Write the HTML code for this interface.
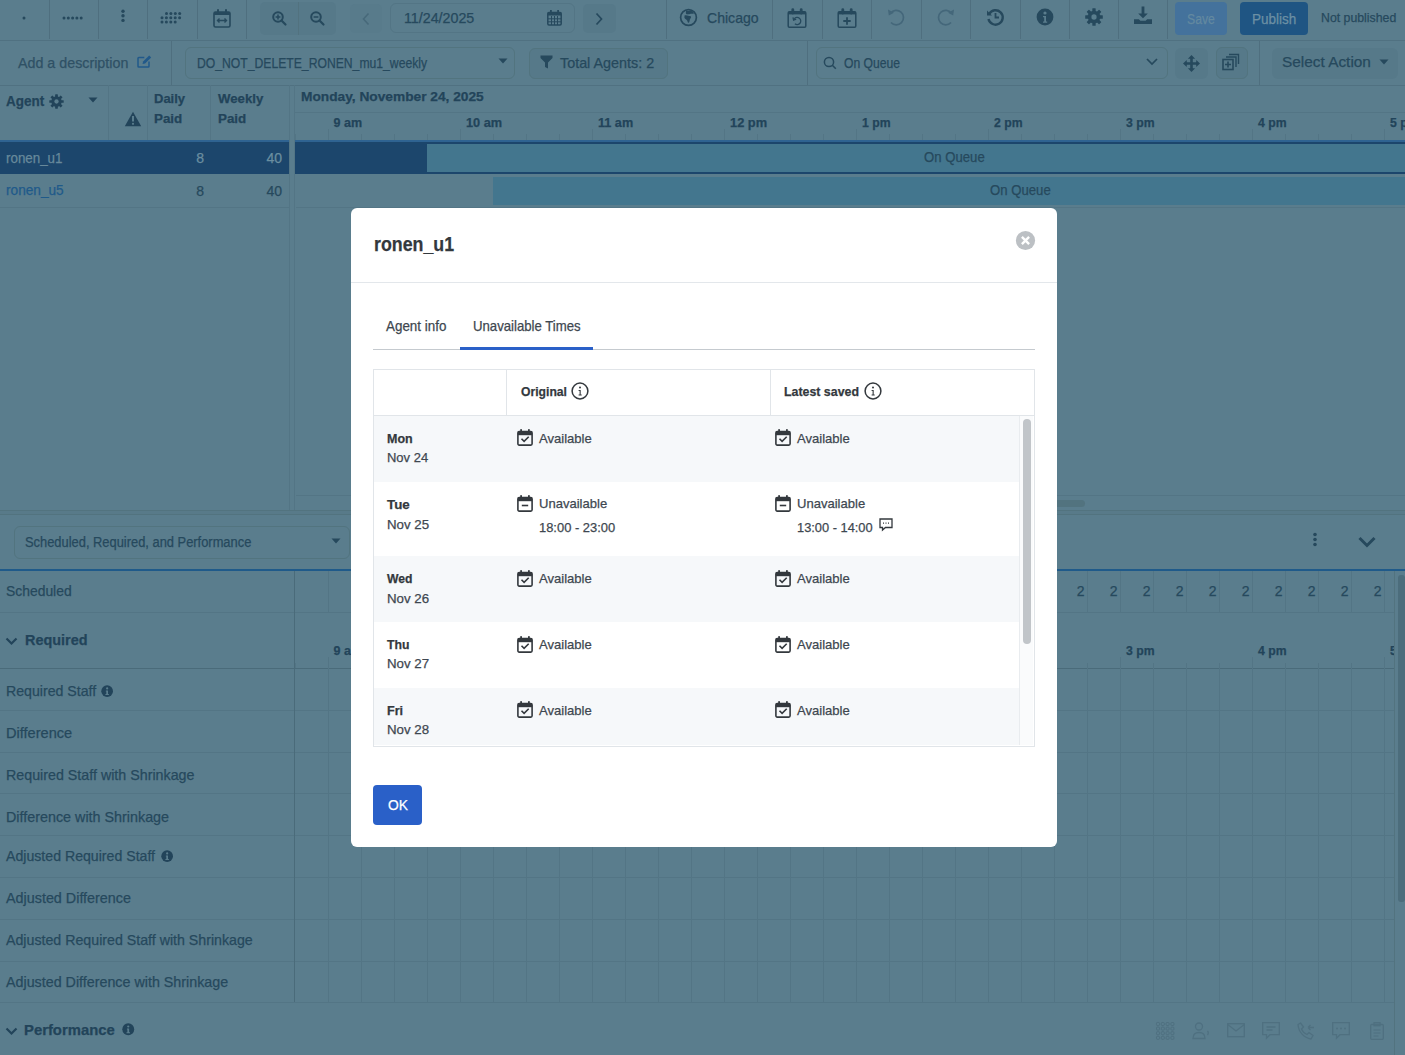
<!DOCTYPE html><html><head><meta charset="utf-8"><title>Schedule</title><style>*{margin:0;padding:0}html,body{width:1405px;height:1055px;overflow:hidden;background:#5a7d8d}
.a{position:absolute}.t{font-family:"Liberation Sans",sans-serif;line-height:1;white-space:nowrap;-webkit-text-stroke:0.25px currentColor}
svg{display:block;overflow:visible}</style></head><body>
<div class="a" style="left:0px;top:0px;width:1405px;height:1055px;background:#5a7d8d;"></div>
<div class="a" style="left:0px;top:40px;width:1405px;height:1px;background:#507181;"></div>
<div class="a" style="left:49px;top:0px;width:1px;height:38.5px;background:#4f6f7f;"></div>
<div class="a" style="left:98px;top:0px;width:1px;height:38.5px;background:#4f6f7f;"></div>
<div class="a" style="left:147px;top:0px;width:1px;height:38.5px;background:#4f6f7f;"></div>
<div class="a" style="left:197px;top:0px;width:1px;height:38.5px;background:#4f6f7f;"></div>
<div class="a" style="left:246px;top:0px;width:1px;height:38.5px;background:#4f6f7f;"></div>
<div class="a" style="left:666px;top:0px;width:1px;height:38.5px;background:#4f6f7f;"></div>
<div class="a" style="left:772px;top:0px;width:1px;height:38.5px;background:#4f6f7f;"></div>
<div class="a" style="left:822px;top:0px;width:1px;height:38.5px;background:#4f6f7f;"></div>
<div class="a" style="left:871px;top:0px;width:1px;height:38.5px;background:#4f6f7f;"></div>
<div class="a" style="left:921px;top:0px;width:1px;height:38.5px;background:#4f6f7f;"></div>
<div class="a" style="left:970px;top:0px;width:1px;height:38.5px;background:#4f6f7f;"></div>
<div class="a" style="left:1020px;top:0px;width:1px;height:38.5px;background:#4f6f7f;"></div>
<div class="a" style="left:1069px;top:0px;width:1px;height:38.5px;background:#4f6f7f;"></div>
<div class="a" style="left:1118px;top:0px;width:1px;height:38.5px;background:#4f6f7f;"></div>
<div class="a" style="left:1167px;top:0px;width:1px;height:38.5px;background:#4f6f7f;"></div>
<svg class="a" style="left:20px;top:14px;" width="8" height="8" viewBox="0 0 8 8"><circle cx="4" cy="4" r="1.5" fill="#26495d"/></svg>
<svg class="a" style="left:60px;top:14px;" width="26" height="8" viewBox="0 0 26 8"><circle cx="4.0" cy="4" r="1.5" fill="#26495d"/><circle cx="8.3" cy="4" r="1.5" fill="#26495d"/><circle cx="12.6" cy="4" r="1.5" fill="#26495d"/><circle cx="16.9" cy="4" r="1.5" fill="#26495d"/><circle cx="21.2" cy="4" r="1.5" fill="#26495d"/></svg>
<svg class="a" style="left:119px;top:8px;" width="8" height="18" viewBox="0 0 8 18"><circle cx="4" cy="3.2" r="1.7" fill="#26495d"/><circle cx="4" cy="7.8" r="1.7" fill="#26495d"/><circle cx="4" cy="12.4" r="1.7" fill="#26495d"/></svg>
<svg class="a" style="left:160px;top:11px;" width="24" height="14" viewBox="0 0 24 14"><circle cx="6.5" cy="2.5" r="1.5" fill="#26495d"/><circle cx="10.9" cy="2.5" r="1.5" fill="#26495d"/><circle cx="15.3" cy="2.5" r="1.5" fill="#26495d"/><circle cx="19.7" cy="2.5" r="1.5" fill="#26495d"/><circle cx="2.0" cy="6.8" r="1.5" fill="#26495d"/><circle cx="6.4" cy="6.8" r="1.5" fill="#26495d"/><circle cx="10.8" cy="6.8" r="1.5" fill="#26495d"/><circle cx="15.2" cy="6.8" r="1.5" fill="#26495d"/><circle cx="19.6" cy="6.8" r="1.5" fill="#26495d"/><circle cx="2.0" cy="11" r="1.5" fill="#26495d"/><circle cx="6.4" cy="11" r="1.5" fill="#26495d"/><circle cx="10.8" cy="11" r="1.5" fill="#26495d"/><circle cx="15.2" cy="11" r="1.5" fill="#26495d"/></svg>
<svg class="a" style="left:213px;top:8px;" width="18" height="20" viewBox="0 0 18 20"><rect x="1" y="4" width="16" height="15" rx="1.5" fill="none" stroke="#26495d" stroke-width="1.6"/><rect x="1" y="4" width="16" height="3" fill="#26495d"/><rect x="4" y="1" width="2" height="5" rx="1" fill="#26495d"/><rect x="12" y="1" width="2" height="5" rx="1" fill="#26495d"/><path d="M4.5 12.5h9M6.5 10.5l-2 2 2 2M11.5 10.5l2 2-2 2" fill="none" stroke="#26495d" stroke-width="1.4"/></svg>
<div class="a" style="left:260px;top:2px;width:76px;height:33px;background:#567989;border-radius:5px;"></div>
<div class="a" style="left:298px;top:2px;width:1px;height:33px;background:#52727f;"></div>
<svg class="a" style="left:272px;top:11px;" width="15" height="15" viewBox="0 0 15 15"><circle cx="6" cy="6" r="4.8" fill="none" stroke="#26495d" stroke-width="2"/><path d="M9.5 9.5l4 4" stroke="#26495d" stroke-width="2.2" stroke-linecap="round"/><path d="M3.6 6h4.8" stroke="#26495d" stroke-width="1.5"/><path d="M6 3.6v4.8" stroke="#26495d" stroke-width="1.5"/></svg>
<svg class="a" style="left:310px;top:11px;" width="15" height="15" viewBox="0 0 15 15"><circle cx="6" cy="6" r="4.8" fill="none" stroke="#26495d" stroke-width="2"/><path d="M9.5 9.5l4 4" stroke="#26495d" stroke-width="2.2" stroke-linecap="round"/><path d="M3.6 6h4.8" stroke="#26495d" stroke-width="1.5"/></svg>
<div class="a" style="left:350px;top:4px;width:32px;height:29px;background:#587b8b;border-radius:5px;"></div>
<svg class="a" style="left:361px;top:12px;" width="10" height="14" viewBox="0 0 10 14"><path d="M7.5 1.5L2.5 7l5 5.5" fill="none" stroke="#47697a" stroke-width="1.6"/></svg>
<div class="a" style="left:390px;top:3px;width:185px;height:30px;background:transparent;box-sizing:border-box;border:1px solid #537585;border-radius:6px;"></div>
<div id="t0" class="a t" style="left:403.5px;top:11.35px;font-size:14px;color:#26495d;font-weight:400;transform:scaleX(1.0184);transform-origin:0 0;">11/24/2025</div>
<svg class="a" style="left:547px;top:10px;" width="15" height="16" viewBox="0 0 15 16"><rect x="0.8" y="2.5" width="13.4" height="12.5" rx="1.2" fill="none" stroke="#26495d" stroke-width="1.5"/><rect x="0.8" y="2.5" width="13.4" height="3" fill="#26495d"/><rect x="3" y="0" width="1.8" height="4" fill="#26495d"/><rect x="10.2" y="0" width="1.8" height="4" fill="#26495d"/><path d="M1 8.8h13M1 11.8h13M4.5 6v9M7.5 6v9M10.5 6v9" stroke="#26495d" stroke-width="1"/></svg>
<div class="a" style="left:583px;top:4px;width:33px;height:29px;background:#567989;border-radius:5px;"></div>
<svg class="a" style="left:594px;top:12px;" width="10" height="14" viewBox="0 0 10 14"><path d="M2.5 1.5L7.5 7l-5 5.5" fill="none" stroke="#26495d" stroke-width="1.7"/></svg>
<svg class="a" style="left:679px;top:8px;" width="19" height="19" viewBox="0 0 19 19"><circle cx="9.5" cy="9.5" r="7.9" fill="none" stroke="#26495d" stroke-width="1.7"/><path d="M7 2.5c1.5 1 3 .5 4.5 0 1.5.7 3 1.8 3.5 3-1.5.5-3 0-4 .5-1 .3-2 0-3 .5-1-.5-1.5-1.5-1-2.2z" fill="#26495d"/><path d="M5.5 7.5c1.5-.5 3 0 4 .3 1 .5 2 0 2.5.8.3 1-.5 1.8-1 2.6-.5 1-.3 2.3-1 3.4-.6.6-1.2 0-1.4-.8-.2-1.2-.8-2-1.8-2.6-1-.5-1.8-1.5-1.3-2.6z" fill="#26495d"/></svg>
<div id="t1" class="a t" style="left:706.5px;top:10.30px;font-size:15px;color:#26495d;font-weight:400;transform:scaleX(0.9380);transform-origin:0 0;">Chicago</div>
<svg class="a" style="left:787px;top:7px;" width="20" height="22" viewBox="0 0 20 22"><rect x="1.2" y="4.8" width="17.6" height="15.4" rx="1.3" fill="none" stroke="#26495d" stroke-width="1.5"/><rect x="1.2" y="4.8" width="17.6" height="2.6" fill="#26495d"/><path d="M5.8 6V2.6M14.2 6V2.6" stroke="#26495d" stroke-width="2.8" stroke-linecap="round"/><path d="M7.3 11.8a3.6 3.6 0 1 1 .6 5" fill="none" stroke="#26495d" stroke-width="1.3"/><path d="M6 10.3l.6 2.8 2.6-1" fill="none" stroke="#26495d" stroke-width="1.3"/></svg>
<svg class="a" style="left:837px;top:7px;" width="20" height="22" viewBox="0 0 20 22"><rect x="1.2" y="4.8" width="17.6" height="15.4" rx="1.3" fill="none" stroke="#26495d" stroke-width="1.5"/><rect x="1.2" y="4.8" width="17.6" height="2.6" fill="#26495d"/><path d="M5.8 6V2.6M14.2 6V2.6" stroke="#26495d" stroke-width="2.8" stroke-linecap="round"/><path d="M10 10.3v7.4M6.3 14h7.4" stroke="#26495d" stroke-width="1.8"/></svg>
<svg class="a" style="left:886px;top:7px;" width="20" height="20" viewBox="0 0 20 20"><path d="M4.6 6.2A7.2 7.2 0 1 1 5 15.5" fill="none" stroke="#44677a" stroke-width="1.7"/><path d="M2 2.5l.8 6 5.2-2.8z" fill="#44677a"/></svg>
<svg class="a" style="left:936px;top:7px;" width="20" height="20" viewBox="0 0 20 20"><path d="M15.4 6.2A7.2 7.2 0 1 0 15 15.5" fill="none" stroke="#44677a" stroke-width="1.7"/><path d="M18 2.5l-.8 6-5.2-2.8z" fill="#44677a"/></svg>
<svg class="a" style="left:986px;top:8px;" width="18" height="18" viewBox="0 0 18 18"><path d="M3.2 6A7.2 7.2 0 1 1 2.5 11" fill="none" stroke="#26495d" stroke-width="2.4"/><path d="M1 2.5v5h5z" fill="#26495d"/><path d="M9.5 5v4.5h3.5" fill="none" stroke="#26495d" stroke-width="1.8"/></svg>
<svg class="a" style="left:1036px;top:8px;" width="18" height="18" viewBox="0 0 18 18"><circle cx="9" cy="9" r="8.4" fill="#26495d"/><circle cx="9" cy="5" r="1.6" fill="#5a7d8d"/><path d="M7 8h3v5.5h1.2v1.3H7v-1.3h1.2V9.3H7z" fill="#5a7d8d"/></svg>
<svg class="a" style="left:1085px;top:8px;" width="18" height="18" viewBox="0 0 18 18"><rect x="7.33" y="0.20" width="3.34" height="4.40" rx="0.53" fill="#26495d" transform="rotate(0 9 9)"/><rect x="7.33" y="0.20" width="3.34" height="4.40" rx="0.53" fill="#26495d" transform="rotate(45 9 9)"/><rect x="7.33" y="0.20" width="3.34" height="4.40" rx="0.53" fill="#26495d" transform="rotate(90 9 9)"/><rect x="7.33" y="0.20" width="3.34" height="4.40" rx="0.53" fill="#26495d" transform="rotate(135 9 9)"/><rect x="7.33" y="0.20" width="3.34" height="4.40" rx="0.53" fill="#26495d" transform="rotate(180 9 9)"/><rect x="7.33" y="0.20" width="3.34" height="4.40" rx="0.53" fill="#26495d" transform="rotate(225 9 9)"/><rect x="7.33" y="0.20" width="3.34" height="4.40" rx="0.53" fill="#26495d" transform="rotate(270 9 9)"/><rect x="7.33" y="0.20" width="3.34" height="4.40" rx="0.53" fill="#26495d" transform="rotate(315 9 9)"/><circle cx="9" cy="9" r="6.34" fill="#26495d"/><circle cx="9" cy="9" r="2.64" fill="#5a7d8d"/></svg>
<svg class="a" style="left:1133px;top:6px;" width="20" height="19" viewBox="0 0 20 19"><path d="M8.6 0.5h2.8v7h3.4L10 12.3 5.2 7.5h3.4z" fill="#26495d"/><path d="M1 13.2h4.8l1.6 1.6h5.2l1.6-1.6H19V18H1z" fill="#26495d"/></svg>
<div class="a" style="left:1175px;top:2px;width:52px;height:32.5px;background:#44729c;border-radius:4px;"></div>
<div id="t2" class="a t" style="left:1187px;top:11.65px;font-size:14px;color:#6389a0;font-weight:500;transform:scaleX(0.8716);transform-origin:0 0;">Save</div>
<div class="a" style="left:1240px;top:2px;width:68px;height:32.5px;background:#1f5583;border-radius:4px;"></div>
<div id="t3" class="a t" style="left:1252.4px;top:11.65px;font-size:14px;color:#6c90a4;font-weight:500;transform:scaleX(0.9653);transform-origin:0 0;">Publish</div>
<div id="t4" class="a t" style="left:1321.3px;top:10.80px;font-size:13px;color:#26495d;font-weight:400;transform:scaleX(0.9467);transform-origin:0 0;">Not published</div>
<div class="a" style="left:0px;top:85px;width:1405px;height:1px;background:#507181;"></div>
<div class="a" style="left:171px;top:41px;width:1px;height:44px;background:#4f6f7f;"></div>
<div class="a" style="left:807px;top:41px;width:1px;height:44px;background:#4f6f7f;"></div>
<div class="a" style="left:1259px;top:41px;width:1px;height:44px;background:#4f6f7f;"></div>
<div id="t5" class="a t" style="left:18px;top:54.60px;font-size:15px;color:#2f5165;font-weight:400;transform:scaleX(0.9519);transform-origin:0 0;">Add a description</div>
<svg class="a" style="left:137px;top:55px;" width="16" height="13" viewBox="0 0 16 13"><path d="M12 6.5v4.8a.8.8 0 0 1-.8.8H1.8a.8.8 0 0 1-.8-.8V3.2a.8.8 0 0 1 .8-.8h5.5" fill="none" stroke="#21598a" stroke-width="1.5"/><path d="M5.5 9l.6-2.6L12.2.6l2 2-6.1 5.8z" fill="#21598a"/></svg>
<div class="a" style="left:185px;top:47px;width:330px;height:32px;background:transparent;box-sizing:border-box;border:1px solid #52747f;border-radius:6px;"></div>
<div id="t6" class="a t" style="left:197.4px;top:56.15px;font-size:14px;color:#26495d;font-weight:400;transform:scaleX(0.8697);transform-origin:0 0;">DO_NOT_DELETE_RONEN_mu1_weekly</div>
<svg class="a" style="left:498px;top:58px;" width="10" height="6" viewBox="0 0 10 6"><path d="M0.5 0.5h9L5 5.5z" fill="#26495d"/></svg>
<div class="a" style="left:528.5px;top:47.5px;width:139px;height:31px;background:#567989;box-sizing:border-box;border:1px solid #52747f;border-radius:6px;"></div>
<svg class="a" style="left:540px;top:55px;" width="13" height="14" viewBox="0 0 13 14"><path d="M0.5 0.5h12v2.5L8 7.5v6l-3-1.5v-4.5L0.5 3z" fill="#26495d"/></svg>
<div id="t7" class="a t" style="left:560.4px;top:54.70px;font-size:15px;color:#26495d;font-weight:400;transform:scaleX(0.9567);transform-origin:0 0;">Total Agents: 2</div>
<div class="a" style="left:816px;top:47px;width:351.5px;height:32.2px;background:transparent;box-sizing:border-box;border:1px solid #52747f;border-radius:6px;"></div>
<svg class="a" style="left:823px;top:56px;" width="14" height="14" viewBox="0 0 14 14"><circle cx="6" cy="6" r="4.6" fill="none" stroke="#26495d" stroke-width="1.5"/><path d="M9.3 9.3l3.5 3.5" stroke="#26495d" stroke-width="1.6"/></svg>
<div id="t8" class="a t" style="left:844.2px;top:55.65px;font-size:14px;color:#26495d;font-weight:400;transform:scaleX(0.8686);transform-origin:0 0;">On Queue</div>
<svg class="a" style="left:1146px;top:58px;" width="12" height="8" viewBox="0 0 12 8"><path d="M1 1l5 5 5-5" fill="none" stroke="#26495d" stroke-width="1.7"/></svg>
<div class="a" style="left:1175px;top:47.8px;width:32.5px;height:31.4px;background:#567989;border-radius:6px;"></div>
<svg class="a" style="left:1183px;top:55px;" width="17" height="17" viewBox="0 0 17 17"><path d="M8.5 3v11M3 8.5h11" stroke="#26495d" stroke-width="2.6"/><path d="M8.5 0l3.6 3.8H4.9zM8.5 17l3.6-3.8H4.9zM0 8.5l3.8 3.6V4.9zM17 8.5l-3.8 3.6V4.9z" fill="#26495d"/></svg>
<div class="a" style="left:1215.5px;top:47.2px;width:32.2px;height:31.8px;background:#567989;box-sizing:border-box;border:1px solid #52747f;border-radius:6px;"></div>
<svg class="a" style="left:1222px;top:53px;" width="18" height="18" viewBox="0 0 18 18"><rect x="1" y="6.5" width="10" height="10" fill="none" stroke="#26495d" stroke-width="1.6"/><path d="M4 4h10v10M7 1.5h9.5v9.5" fill="none" stroke="#26495d" stroke-width="1.4"/><path d="M6 8.5v6M3 11.5h6" stroke="#26495d" stroke-width="1.6"/></svg>
<div class="a" style="left:1271.5px;top:47.8px;width:126px;height:31.4px;background:#567989;border-radius:6px;"></div>
<div id="t9" class="a t" style="left:1281.9px;top:54.20px;font-size:15px;color:#26495d;font-weight:400;transform:scaleX(1.0252);transform-origin:0 0;">Select Action</div>
<svg class="a" style="left:1379px;top:59px;" width="10" height="6" viewBox="0 0 10 6"><path d="M0.5 0.5h9L5 5.5z" fill="#26495d"/></svg>
<div class="a" style="left:108px;top:85px;width:1px;height:56px;background:#537585;"></div>
<div class="a" style="left:147px;top:85px;width:1px;height:56px;background:#537585;"></div>
<div class="a" style="left:210px;top:85px;width:1px;height:56px;background:#537585;"></div>
<div id="t10" class="a t" style="left:5.5px;top:94.35px;font-size:14px;color:#22445a;font-weight:700;transform:scaleX(0.9625);transform-origin:0 0;">Agent</div>
<svg class="a" style="left:49px;top:94px;" width="15" height="15" viewBox="0 0 15 15"><rect x="6.13" y="0.30" width="2.74" height="3.60" rx="0.43" fill="#22445a" transform="rotate(0 7.5 7.5)"/><rect x="6.13" y="0.30" width="2.74" height="3.60" rx="0.43" fill="#22445a" transform="rotate(45 7.5 7.5)"/><rect x="6.13" y="0.30" width="2.74" height="3.60" rx="0.43" fill="#22445a" transform="rotate(90 7.5 7.5)"/><rect x="6.13" y="0.30" width="2.74" height="3.60" rx="0.43" fill="#22445a" transform="rotate(135 7.5 7.5)"/><rect x="6.13" y="0.30" width="2.74" height="3.60" rx="0.43" fill="#22445a" transform="rotate(180 7.5 7.5)"/><rect x="6.13" y="0.30" width="2.74" height="3.60" rx="0.43" fill="#22445a" transform="rotate(225 7.5 7.5)"/><rect x="6.13" y="0.30" width="2.74" height="3.60" rx="0.43" fill="#22445a" transform="rotate(270 7.5 7.5)"/><rect x="6.13" y="0.30" width="2.74" height="3.60" rx="0.43" fill="#22445a" transform="rotate(315 7.5 7.5)"/><circle cx="7.5" cy="7.5" r="5.18" fill="#22445a"/><circle cx="7.5" cy="7.5" r="2.16" fill="#5a7d8d"/></svg>
<svg class="a" style="left:88px;top:97px;" width="10" height="6" viewBox="0 0 10 6"><path d="M0.5 0.5h9L5 5.5z" fill="#22445a"/></svg>
<svg class="a" style="left:124px;top:111px;" width="18" height="16" viewBox="0 0 18 16"><path d="M9 0.8L17.2 15.2H0.8z" fill="#22445a"/><path d="M9 5v5.5" stroke="#5a7d8d" stroke-width="2"/><circle cx="9" cy="12.8" r="1.1" fill="#5a7d8d"/></svg>
<div id="t11" class="a t" style="left:154px;top:91.70px;font-size:13px;color:#22445a;font-weight:700;transform-origin:0 0;">Daily</div>
<div id="t12" class="a t" style="left:154px;top:111.60px;font-size:13px;color:#22445a;font-weight:700;transform:scaleX(1.0286);transform-origin:0 0;">Paid</div>
<div id="t13" class="a t" style="left:218px;top:91.70px;font-size:13px;color:#22445a;font-weight:700;transform:scaleX(1.0146);transform-origin:0 0;">Weekly</div>
<div id="t14" class="a t" style="left:218px;top:111.60px;font-size:13px;color:#22445a;font-weight:700;transform:scaleX(1.0286);transform-origin:0 0;">Paid</div>
<div class="a" style="left:289px;top:85px;width:1px;height:425px;background:#537585;"></div>
<div class="a" style="left:294px;top:85px;width:1px;height:425px;background:#537585;"></div>
<div id="t15" class="a t" style="left:300.5px;top:89.90px;font-size:13px;color:#22445a;font-weight:700;transform:scaleX(1.0553);transform-origin:0 0;">Monday, November 24, 2025</div>
<div class="a" style="left:295px;top:112px;width:1110px;height:1px;background:#537585;"></div>
<div id="t16" class="a t" style="left:333.6px;top:116.82px;font-size:12.5px;color:#22445a;font-weight:700;transform-origin:0 0;">9 am</div>
<div class="a" style="left:328px;top:129px;width:1px;height:12px;background:#537585;"></div>
<div class="a" style="left:361px;top:134px;width:1px;height:7px;background:#537585;"></div>
<div class="a" style="left:394px;top:134px;width:1px;height:7px;background:#537585;"></div>
<div class="a" style="left:427px;top:134px;width:1px;height:7px;background:#537585;"></div>
<div id="t17" class="a t" style="left:465.6px;top:116.82px;font-size:12.5px;color:#22445a;font-weight:700;transform:scaleX(1.0190);transform-origin:0 0;">10 am</div>
<div class="a" style="left:460px;top:129px;width:1px;height:12px;background:#537585;"></div>
<div class="a" style="left:493px;top:134px;width:1px;height:7px;background:#537585;"></div>
<div class="a" style="left:526px;top:134px;width:1px;height:7px;background:#537585;"></div>
<div class="a" style="left:559px;top:134px;width:1px;height:7px;background:#537585;"></div>
<div id="t18" class="a t" style="left:597.6px;top:116.82px;font-size:12.5px;color:#22445a;font-weight:700;transform:scaleX(1.0104);transform-origin:0 0;">11 am</div>
<div class="a" style="left:592px;top:129px;width:1px;height:12px;background:#537585;"></div>
<div class="a" style="left:625px;top:134px;width:1px;height:7px;background:#537585;"></div>
<div class="a" style="left:658px;top:134px;width:1px;height:7px;background:#537585;"></div>
<div class="a" style="left:691px;top:134px;width:1px;height:7px;background:#537585;"></div>
<div id="t19" class="a t" style="left:729.6px;top:116.82px;font-size:12.5px;color:#22445a;font-weight:700;transform:scaleX(1.0274);transform-origin:0 0;">12 pm</div>
<div class="a" style="left:724px;top:129px;width:1px;height:12px;background:#537585;"></div>
<div class="a" style="left:757px;top:134px;width:1px;height:7px;background:#537585;"></div>
<div class="a" style="left:790px;top:134px;width:1px;height:7px;background:#537585;"></div>
<div class="a" style="left:823px;top:134px;width:1px;height:7px;background:#537585;"></div>
<div id="t20" class="a t" style="left:861.6px;top:116.82px;font-size:12.5px;color:#22445a;font-weight:700;transform:scaleX(0.9773);transform-origin:0 0;">1 pm</div>
<div class="a" style="left:856px;top:129px;width:1px;height:12px;background:#537585;"></div>
<div class="a" style="left:889px;top:134px;width:1px;height:7px;background:#537585;"></div>
<div class="a" style="left:922px;top:134px;width:1px;height:7px;background:#537585;"></div>
<div class="a" style="left:955px;top:134px;width:1px;height:7px;background:#537585;"></div>
<div id="t21" class="a t" style="left:993.6px;top:116.82px;font-size:12.5px;color:#22445a;font-weight:700;transform:scaleX(0.9773);transform-origin:0 0;">2 pm</div>
<div class="a" style="left:988px;top:129px;width:1px;height:12px;background:#537585;"></div>
<div class="a" style="left:1021px;top:134px;width:1px;height:7px;background:#537585;"></div>
<div class="a" style="left:1054px;top:134px;width:1px;height:7px;background:#537585;"></div>
<div class="a" style="left:1087px;top:134px;width:1px;height:7px;background:#537585;"></div>
<div id="t22" class="a t" style="left:1125.6px;top:116.82px;font-size:12.5px;color:#22445a;font-weight:700;transform:scaleX(0.9773);transform-origin:0 0;">3 pm</div>
<div class="a" style="left:1120px;top:129px;width:1px;height:12px;background:#537585;"></div>
<div class="a" style="left:1153px;top:134px;width:1px;height:7px;background:#537585;"></div>
<div class="a" style="left:1186px;top:134px;width:1px;height:7px;background:#537585;"></div>
<div class="a" style="left:1219px;top:134px;width:1px;height:7px;background:#537585;"></div>
<div id="t23" class="a t" style="left:1257.6px;top:116.82px;font-size:12.5px;color:#22445a;font-weight:700;transform:scaleX(0.9773);transform-origin:0 0;">4 pm</div>
<div class="a" style="left:1252px;top:129px;width:1px;height:12px;background:#537585;"></div>
<div class="a" style="left:1285px;top:134px;width:1px;height:7px;background:#537585;"></div>
<div class="a" style="left:1318px;top:134px;width:1px;height:7px;background:#537585;"></div>
<div class="a" style="left:1351px;top:134px;width:1px;height:7px;background:#537585;"></div>
<div id="t24" class="a t" style="left:1389.6px;top:116.82px;font-size:12.5px;color:#22445a;font-weight:700;transform:scaleX(0.9773);transform-origin:0 0;">5 pm</div>
<div class="a" style="left:1384px;top:129px;width:1px;height:12px;background:#537585;"></div>
<div class="a" style="left:295px;top:134px;width:1px;height:7px;background:#537585;"></div>
<div class="a" style="left:0px;top:140px;width:289px;height:2px;background:#2f6391;"></div>
<div class="a" style="left:295px;top:140px;width:1110px;height:2px;background:#2f6391;"></div>
<div class="a" style="left:0px;top:142px;width:289px;height:32px;background:#1c466c;"></div>
<div class="a" style="left:295px;top:142px;width:1110px;height:32px;background:#1c466c;"></div>
<div class="a" style="left:427px;top:144px;width:978px;height:28px;background:#43768e;"></div>
<div id="t25" class="a t" style="left:5.7px;top:150.63px;font-size:14.5px;color:#67899b;font-weight:400;transform:scaleX(0.9214);transform-origin:0 0;">ronen_u1</div>
<div id="t26" class="a t" style="right:1201px;top:150.75px;font-size:14px;color:#6a8ea0;font-weight:400;transform-origin:100% 0;">8</div>
<div id="t27" class="a t" style="right:1123px;top:150.75px;font-size:14px;color:#6a8ea0;font-weight:400;transform-origin:100% 0;">40</div>
<div id="t28" class="a t" style="left:924.3px;top:149.65px;font-size:14px;color:#26495d;font-weight:400;transform:scaleX(0.9396);transform-origin:0 0;">On Queue</div>
<div class="a" style="left:493.3px;top:177px;width:912px;height:28px;background:#43768e;"></div>
<div id="t29" class="a t" style="left:5.7px;top:183.43px;font-size:14.5px;color:#1f5a8a;font-weight:400;transform:scaleX(0.9410);transform-origin:0 0;">ronen_u5</div>
<div id="t30" class="a t" style="right:1201px;top:183.65px;font-size:14px;color:#26495d;font-weight:400;transform-origin:100% 0;">8</div>
<div id="t31" class="a t" style="right:1123px;top:183.65px;font-size:14px;color:#26495d;font-weight:400;transform-origin:100% 0;">40</div>
<div id="t32" class="a t" style="left:990px;top:182.65px;font-size:14px;color:#26495d;font-weight:400;transform:scaleX(0.9396);transform-origin:0 0;">On Queue</div>
<div class="a" style="left:0px;top:207px;width:289px;height:1px;background:#537585;"></div>
<div class="a" style="left:295.5px;top:207px;width:1110px;height:1px;background:#537585;"></div>
<div class="a" style="left:295.5px;top:495px;width:1110px;height:1px;background:#537585;"></div>
<div class="a" style="left:1000px;top:499.5px;width:85px;height:7px;background:#52737f;border-radius:3.5px;"></div>
<div class="a" style="left:0px;top:510px;width:1405px;height:4.5px;background:#587a89;"></div>
<div class="a" style="left:0px;top:510px;width:1405px;height:1px;background:#52737f;"></div>
<div class="a" style="left:0px;top:514px;width:1405px;height:1px;background:#52737f;"></div>
<div class="a" style="left:14px;top:526.4px;width:336px;height:32.3px;background:transparent;box-sizing:border-box;border:1px solid #52747f;border-radius:6px;"></div>
<div id="t33" class="a t" style="left:25px;top:534.55px;font-size:14px;color:#26495d;font-weight:400;transform:scaleX(0.9202);transform-origin:0 0;">Scheduled, Required, and Performance</div>
<svg class="a" style="left:331px;top:538px;" width="10" height="6" viewBox="0 0 10 6"><path d="M0.5 0.5h9L5 5.5z" fill="#26495d"/></svg>
<svg class="a" style="left:1311px;top:532px;" width="8" height="16" viewBox="0 0 8 16"><circle cx="4" cy="2.5" r="1.8" fill="#26495d"/><circle cx="4" cy="7.5" r="1.8" fill="#26495d"/><circle cx="4" cy="12.5" r="1.8" fill="#26495d"/></svg>
<svg class="a" style="left:1358px;top:536px;" width="18" height="12" viewBox="0 0 18 12"><path d="M1.5 2l7.5 7.5L16.5 2" fill="none" stroke="#26495d" stroke-width="3"/></svg>
<div class="a" style="left:0px;top:569px;width:1405px;height:2px;background:#1f5a8a;"></div>
<div class="a" style="left:0px;top:612px;width:1394px;height:1px;background:#537585;"></div>
<div class="a" style="left:0px;top:668px;width:1394px;height:1px;background:#4a6b7a;"></div>
<div class="a" style="left:0px;top:710px;width:1394px;height:1px;background:#537585;"></div>
<div class="a" style="left:0px;top:752px;width:1394px;height:1px;background:#537585;"></div>
<div class="a" style="left:0px;top:793px;width:1394px;height:1px;background:#537585;"></div>
<div class="a" style="left:0px;top:835px;width:1394px;height:1px;background:#537585;"></div>
<div class="a" style="left:0px;top:877px;width:1394px;height:1px;background:#537585;"></div>
<div class="a" style="left:0px;top:919px;width:1394px;height:1px;background:#537585;"></div>
<div class="a" style="left:0px;top:961px;width:1394px;height:1px;background:#537585;"></div>
<div class="a" style="left:0px;top:1002px;width:1394px;height:1px;background:#537585;"></div>
<div class="a" style="left:294px;top:571px;width:1px;height:431.3px;background:#4a6b7a;"></div>
<div class="a" style="left:328px;top:571px;width:1px;height:41.4px;background:#537585;"></div>
<div class="a" style="left:328px;top:668.3px;width:1px;height:334px;background:#537585;"></div>
<div class="a" style="left:361px;top:571px;width:1px;height:41.4px;background:#537585;"></div>
<div class="a" style="left:361px;top:668.3px;width:1px;height:334px;background:#537585;"></div>
<div class="a" style="left:394px;top:571px;width:1px;height:41.4px;background:#537585;"></div>
<div class="a" style="left:394px;top:668.3px;width:1px;height:334px;background:#537585;"></div>
<div class="a" style="left:427px;top:571px;width:1px;height:41.4px;background:#537585;"></div>
<div class="a" style="left:427px;top:668.3px;width:1px;height:334px;background:#537585;"></div>
<div class="a" style="left:460px;top:571px;width:1px;height:41.4px;background:#537585;"></div>
<div class="a" style="left:460px;top:668.3px;width:1px;height:334px;background:#537585;"></div>
<div class="a" style="left:493px;top:571px;width:1px;height:41.4px;background:#537585;"></div>
<div class="a" style="left:493px;top:668.3px;width:1px;height:334px;background:#537585;"></div>
<div class="a" style="left:526px;top:571px;width:1px;height:41.4px;background:#537585;"></div>
<div class="a" style="left:526px;top:668.3px;width:1px;height:334px;background:#537585;"></div>
<div class="a" style="left:559px;top:571px;width:1px;height:41.4px;background:#537585;"></div>
<div class="a" style="left:559px;top:668.3px;width:1px;height:334px;background:#537585;"></div>
<div class="a" style="left:592px;top:571px;width:1px;height:41.4px;background:#537585;"></div>
<div class="a" style="left:592px;top:668.3px;width:1px;height:334px;background:#537585;"></div>
<div class="a" style="left:625px;top:571px;width:1px;height:41.4px;background:#537585;"></div>
<div class="a" style="left:625px;top:668.3px;width:1px;height:334px;background:#537585;"></div>
<div class="a" style="left:658px;top:571px;width:1px;height:41.4px;background:#537585;"></div>
<div class="a" style="left:658px;top:668.3px;width:1px;height:334px;background:#537585;"></div>
<div class="a" style="left:691px;top:571px;width:1px;height:41.4px;background:#537585;"></div>
<div class="a" style="left:691px;top:668.3px;width:1px;height:334px;background:#537585;"></div>
<div class="a" style="left:724px;top:571px;width:1px;height:41.4px;background:#537585;"></div>
<div class="a" style="left:724px;top:668.3px;width:1px;height:334px;background:#537585;"></div>
<div class="a" style="left:757px;top:571px;width:1px;height:41.4px;background:#537585;"></div>
<div class="a" style="left:757px;top:668.3px;width:1px;height:334px;background:#537585;"></div>
<div class="a" style="left:790px;top:571px;width:1px;height:41.4px;background:#537585;"></div>
<div class="a" style="left:790px;top:668.3px;width:1px;height:334px;background:#537585;"></div>
<div class="a" style="left:823px;top:571px;width:1px;height:41.4px;background:#537585;"></div>
<div class="a" style="left:823px;top:668.3px;width:1px;height:334px;background:#537585;"></div>
<div class="a" style="left:856px;top:571px;width:1px;height:41.4px;background:#537585;"></div>
<div class="a" style="left:856px;top:668.3px;width:1px;height:334px;background:#537585;"></div>
<div class="a" style="left:889px;top:571px;width:1px;height:41.4px;background:#537585;"></div>
<div class="a" style="left:889px;top:668.3px;width:1px;height:334px;background:#537585;"></div>
<div class="a" style="left:922px;top:571px;width:1px;height:41.4px;background:#537585;"></div>
<div class="a" style="left:922px;top:668.3px;width:1px;height:334px;background:#537585;"></div>
<div class="a" style="left:955px;top:571px;width:1px;height:41.4px;background:#537585;"></div>
<div class="a" style="left:955px;top:668.3px;width:1px;height:334px;background:#537585;"></div>
<div class="a" style="left:988px;top:571px;width:1px;height:41.4px;background:#537585;"></div>
<div class="a" style="left:988px;top:668.3px;width:1px;height:334px;background:#537585;"></div>
<div class="a" style="left:1021px;top:571px;width:1px;height:41.4px;background:#537585;"></div>
<div class="a" style="left:1021px;top:668.3px;width:1px;height:334px;background:#537585;"></div>
<div class="a" style="left:1054px;top:571px;width:1px;height:41.4px;background:#537585;"></div>
<div class="a" style="left:1054px;top:668.3px;width:1px;height:334px;background:#537585;"></div>
<div class="a" style="left:1087px;top:571px;width:1px;height:41.4px;background:#537585;"></div>
<div class="a" style="left:1087px;top:668.3px;width:1px;height:334px;background:#537585;"></div>
<div class="a" style="left:1120px;top:571px;width:1px;height:41.4px;background:#537585;"></div>
<div class="a" style="left:1120px;top:668.3px;width:1px;height:334px;background:#537585;"></div>
<div class="a" style="left:1153px;top:571px;width:1px;height:41.4px;background:#537585;"></div>
<div class="a" style="left:1153px;top:668.3px;width:1px;height:334px;background:#537585;"></div>
<div class="a" style="left:1186px;top:571px;width:1px;height:41.4px;background:#537585;"></div>
<div class="a" style="left:1186px;top:668.3px;width:1px;height:334px;background:#537585;"></div>
<div class="a" style="left:1219px;top:571px;width:1px;height:41.4px;background:#537585;"></div>
<div class="a" style="left:1219px;top:668.3px;width:1px;height:334px;background:#537585;"></div>
<div class="a" style="left:1252px;top:571px;width:1px;height:41.4px;background:#537585;"></div>
<div class="a" style="left:1252px;top:668.3px;width:1px;height:334px;background:#537585;"></div>
<div class="a" style="left:1285px;top:571px;width:1px;height:41.4px;background:#537585;"></div>
<div class="a" style="left:1285px;top:668.3px;width:1px;height:334px;background:#537585;"></div>
<div class="a" style="left:1318px;top:571px;width:1px;height:41.4px;background:#537585;"></div>
<div class="a" style="left:1318px;top:668.3px;width:1px;height:334px;background:#537585;"></div>
<div class="a" style="left:1351px;top:571px;width:1px;height:41.4px;background:#537585;"></div>
<div class="a" style="left:1351px;top:668.3px;width:1px;height:334px;background:#537585;"></div>
<div class="a" style="left:1384px;top:571px;width:1px;height:41.4px;background:#537585;"></div>
<div class="a" style="left:1384px;top:668.3px;width:1px;height:334px;background:#537585;"></div>
<div id="t34" class="a t" style="left:5.6px;top:583.53px;font-size:14.5px;color:#26495d;font-weight:400;transform:scaleX(0.9582);transform-origin:0 0;">Scheduled</div>
<div id="t35" class="a t" style="right:320.4000000000001px;top:584.25px;font-size:14px;color:#26495d;font-weight:400;transform-origin:100% 0;">2</div>
<div id="t36" class="a t" style="right:287.4000000000001px;top:584.25px;font-size:14px;color:#26495d;font-weight:400;transform-origin:100% 0;">2</div>
<div id="t37" class="a t" style="right:254.4000000000001px;top:584.25px;font-size:14px;color:#26495d;font-weight:400;transform-origin:100% 0;">2</div>
<div id="t38" class="a t" style="right:221.4000000000001px;top:584.25px;font-size:14px;color:#26495d;font-weight:400;transform-origin:100% 0;">2</div>
<div id="t39" class="a t" style="right:188.4000000000001px;top:584.25px;font-size:14px;color:#26495d;font-weight:400;transform-origin:100% 0;">2</div>
<div id="t40" class="a t" style="right:155.4000000000001px;top:584.25px;font-size:14px;color:#26495d;font-weight:400;transform-origin:100% 0;">2</div>
<div id="t41" class="a t" style="right:122.40000000000009px;top:584.25px;font-size:14px;color:#26495d;font-weight:400;transform-origin:100% 0;">2</div>
<div id="t42" class="a t" style="right:89.40000000000009px;top:584.25px;font-size:14px;color:#26495d;font-weight:400;transform-origin:100% 0;">2</div>
<div id="t43" class="a t" style="right:56.40000000000009px;top:584.25px;font-size:14px;color:#26495d;font-weight:400;transform-origin:100% 0;">2</div>
<div id="t44" class="a t" style="right:23.40000000000009px;top:584.25px;font-size:14px;color:#26495d;font-weight:400;transform-origin:100% 0;">2</div>
<svg class="a" style="left:5px;top:636.8px;" width="13" height="9" viewBox="0 0 13 9"><path d="M1.5 1.5l5 5 5-5" fill="none" stroke="#22445a" stroke-width="2.2"/></svg>
<div id="t45" class="a t" style="left:24.6px;top:632.10px;font-size:15px;color:#22445a;font-weight:700;transform:scaleX(0.9617);transform-origin:0 0;">Required</div>
<div id="t46" class="a t" style="left:333.6px;top:644.92px;font-size:12.5px;color:#22445a;font-weight:700;transform-origin:0 0;">9 am</div>
<div class="a" style="left:328px;top:657.3px;width:1px;height:11px;background:#537585;"></div>
<div class="a" style="left:361px;top:663px;width:1px;height:5.3px;background:#537585;"></div>
<div class="a" style="left:394px;top:663px;width:1px;height:5.3px;background:#537585;"></div>
<div class="a" style="left:427px;top:663px;width:1px;height:5.3px;background:#537585;"></div>
<div id="t47" class="a t" style="left:465.6px;top:644.92px;font-size:12.5px;color:#22445a;font-weight:700;transform:scaleX(1.0190);transform-origin:0 0;">10 am</div>
<div class="a" style="left:460px;top:657.3px;width:1px;height:11px;background:#537585;"></div>
<div class="a" style="left:493px;top:663px;width:1px;height:5.3px;background:#537585;"></div>
<div class="a" style="left:526px;top:663px;width:1px;height:5.3px;background:#537585;"></div>
<div class="a" style="left:559px;top:663px;width:1px;height:5.3px;background:#537585;"></div>
<div id="t48" class="a t" style="left:597.6px;top:644.92px;font-size:12.5px;color:#22445a;font-weight:700;transform:scaleX(1.0104);transform-origin:0 0;">11 am</div>
<div class="a" style="left:592px;top:657.3px;width:1px;height:11px;background:#537585;"></div>
<div class="a" style="left:625px;top:663px;width:1px;height:5.3px;background:#537585;"></div>
<div class="a" style="left:658px;top:663px;width:1px;height:5.3px;background:#537585;"></div>
<div class="a" style="left:691px;top:663px;width:1px;height:5.3px;background:#537585;"></div>
<div id="t49" class="a t" style="left:729.6px;top:644.92px;font-size:12.5px;color:#22445a;font-weight:700;transform:scaleX(1.0274);transform-origin:0 0;">12 pm</div>
<div class="a" style="left:724px;top:657.3px;width:1px;height:11px;background:#537585;"></div>
<div class="a" style="left:757px;top:663px;width:1px;height:5.3px;background:#537585;"></div>
<div class="a" style="left:790px;top:663px;width:1px;height:5.3px;background:#537585;"></div>
<div class="a" style="left:823px;top:663px;width:1px;height:5.3px;background:#537585;"></div>
<div id="t50" class="a t" style="left:861.6px;top:644.92px;font-size:12.5px;color:#22445a;font-weight:700;transform:scaleX(0.9773);transform-origin:0 0;">1 pm</div>
<div class="a" style="left:856px;top:657.3px;width:1px;height:11px;background:#537585;"></div>
<div class="a" style="left:889px;top:663px;width:1px;height:5.3px;background:#537585;"></div>
<div class="a" style="left:922px;top:663px;width:1px;height:5.3px;background:#537585;"></div>
<div class="a" style="left:955px;top:663px;width:1px;height:5.3px;background:#537585;"></div>
<div id="t51" class="a t" style="left:993.6px;top:644.92px;font-size:12.5px;color:#22445a;font-weight:700;transform:scaleX(0.9773);transform-origin:0 0;">2 pm</div>
<div class="a" style="left:988px;top:657.3px;width:1px;height:11px;background:#537585;"></div>
<div class="a" style="left:1021px;top:663px;width:1px;height:5.3px;background:#537585;"></div>
<div class="a" style="left:1054px;top:663px;width:1px;height:5.3px;background:#537585;"></div>
<div class="a" style="left:1087px;top:663px;width:1px;height:5.3px;background:#537585;"></div>
<div id="t52" class="a t" style="left:1125.6px;top:644.92px;font-size:12.5px;color:#22445a;font-weight:700;transform:scaleX(0.9773);transform-origin:0 0;">3 pm</div>
<div class="a" style="left:1120px;top:657.3px;width:1px;height:11px;background:#537585;"></div>
<div class="a" style="left:1153px;top:663px;width:1px;height:5.3px;background:#537585;"></div>
<div class="a" style="left:1186px;top:663px;width:1px;height:5.3px;background:#537585;"></div>
<div class="a" style="left:1219px;top:663px;width:1px;height:5.3px;background:#537585;"></div>
<div id="t53" class="a t" style="left:1257.6px;top:644.92px;font-size:12.5px;color:#22445a;font-weight:700;transform:scaleX(0.9773);transform-origin:0 0;">4 pm</div>
<div class="a" style="left:1252px;top:657.3px;width:1px;height:11px;background:#537585;"></div>
<div class="a" style="left:1285px;top:663px;width:1px;height:5.3px;background:#537585;"></div>
<div class="a" style="left:1318px;top:663px;width:1px;height:5.3px;background:#537585;"></div>
<div class="a" style="left:1351px;top:663px;width:1px;height:5.3px;background:#537585;"></div>
<div class="a" style="left:1380px;top:640px;width:14px;height:20px;overflow:hidden">
<div id="t54" class="a t" style="left:9.599999999999909px;top:4.92px;font-size:12.5px;color:#22445a;font-weight:700;transform:scaleX(0.9773);transform-origin:0 0;">5 pm</div>
</div>
<div class="a" style="left:1384px;top:657.3px;width:1px;height:11px;background:#537585;"></div>
<div class="a" style="left:295px;top:663px;width:1px;height:5.3px;background:#537585;"></div>
<div id="t55" class="a t" style="left:5.8px;top:683.73px;font-size:14.5px;color:#26495d;font-weight:400;transform:scaleX(0.9762);transform-origin:0 0;">Required Staff</div>
<div id="t56" class="a t" style="left:5.8px;top:725.93px;font-size:14.5px;color:#26495d;font-weight:400;transform:scaleX(1.0053);transform-origin:0 0;">Difference</div>
<div id="t57" class="a t" style="left:5.8px;top:767.73px;font-size:14.5px;color:#26495d;font-weight:400;transform:scaleX(0.9837);transform-origin:0 0;">Required Staff with Shrinkage</div>
<div id="t58" class="a t" style="left:5.8px;top:809.93px;font-size:14.5px;color:#26495d;font-weight:400;transform:scaleX(0.9884);transform-origin:0 0;">Difference with Shrinkage</div>
<div id="t59" class="a t" style="left:5.8px;top:848.83px;font-size:14.5px;color:#26495d;font-weight:400;transform:scaleX(0.9749);transform-origin:0 0;">Adjusted Required Staff</div>
<div id="t60" class="a t" style="left:5.8px;top:890.73px;font-size:14.5px;color:#26495d;font-weight:400;transform:scaleX(0.9896);transform-origin:0 0;">Adjusted Difference</div>
<div id="t61" class="a t" style="left:5.8px;top:932.73px;font-size:14.5px;color:#26495d;font-weight:400;transform:scaleX(0.9791);transform-origin:0 0;">Adjusted Required Staff with Shrinkage</div>
<div id="t62" class="a t" style="left:5.8px;top:974.73px;font-size:14.5px;color:#26495d;font-weight:400;transform:scaleX(0.9856);transform-origin:0 0;">Adjusted Difference with Shrinkage</div>
<svg class="a" style="left:100.6px;top:684.8px;" width="12.3" height="12.3" viewBox="0 0 12.3 12.3"><circle cx="6.15" cy="6.15" r="5.8500000000000005" fill="#22445a"/><circle cx="6.15" cy="3.44" r="1.11" fill="#5a7d8d"/><path d="M4.92 5.41h2.09v3.69h0.86v0.98h-3.44v-0.98h0.86v-2.71h-0.49z" fill="#5a7d8d"/></svg>
<svg class="a" style="left:160.6px;top:850.2px;" width="12.3" height="12.3" viewBox="0 0 12.3 12.3"><circle cx="6.15" cy="6.15" r="5.8500000000000005" fill="#22445a"/><circle cx="6.15" cy="3.44" r="1.11" fill="#5a7d8d"/><path d="M4.92 5.41h2.09v3.69h0.86v0.98h-3.44v-0.98h0.86v-2.71h-0.49z" fill="#5a7d8d"/></svg>
<div class="a" style="left:1398px;top:574.6px;width:7px;height:327.4px;background:#4c6d7c;border-radius:3px;"></div>
<svg class="a" style="left:5px;top:1026.5px;" width="13" height="9" viewBox="0 0 13 9"><path d="M1.5 1.5l5 5 5-5" fill="none" stroke="#22445a" stroke-width="2.2"/></svg>
<div id="t63" class="a t" style="left:24.4px;top:1022.30px;font-size:15px;color:#22445a;font-weight:700;transform:scaleX(0.9893);transform-origin:0 0;">Performance</div>
<svg class="a" style="left:121.6px;top:1023px;" width="12.5" height="12.5" viewBox="0 0 12.5 12.5"><circle cx="6.25" cy="6.25" r="5.95" fill="#22445a"/><circle cx="6.25" cy="3.50" r="1.12" fill="#5a7d8d"/><path d="M5.00 5.50h2.12v3.75h0.88v1.00h-3.50v-1.00h0.88v-2.75h-0.50z" fill="#5a7d8d"/></svg>
<svg class="a" style="left:1156px;top:1022px;" width="18" height="18" viewBox="0 0 18 18"><rect x="0.5" y="0.5" width="3" height="3" rx="0.8" fill="none" stroke="#4f7080" stroke-width="1"/><rect x="5.3" y="0.5" width="3" height="3" rx="0.8" fill="none" stroke="#4f7080" stroke-width="1"/><rect x="10.1" y="0.5" width="3" height="3" rx="0.8" fill="none" stroke="#4f7080" stroke-width="1"/><rect x="14.9" y="0.5" width="3" height="3" rx="0.8" fill="none" stroke="#4f7080" stroke-width="1"/><rect x="0.5" y="5.1" width="3" height="3" rx="0.8" fill="none" stroke="#4f7080" stroke-width="1"/><rect x="5.3" y="5.1" width="3" height="3" rx="0.8" fill="none" stroke="#4f7080" stroke-width="1"/><rect x="10.1" y="5.1" width="3" height="3" rx="0.8" fill="none" stroke="#4f7080" stroke-width="1"/><rect x="14.9" y="5.1" width="3" height="3" rx="0.8" fill="none" stroke="#4f7080" stroke-width="1"/><rect x="0.5" y="9.7" width="3" height="3" rx="0.8" fill="none" stroke="#4f7080" stroke-width="1"/><rect x="5.3" y="9.7" width="3" height="3" rx="0.8" fill="none" stroke="#4f7080" stroke-width="1"/><rect x="10.1" y="9.7" width="3" height="3" rx="0.8" fill="none" stroke="#4f7080" stroke-width="1"/><rect x="14.9" y="9.7" width="3" height="3" rx="0.8" fill="none" stroke="#4f7080" stroke-width="1"/><rect x="0.5" y="14.3" width="3" height="3" rx="0.8" fill="none" stroke="#4f7080" stroke-width="1"/><rect x="5.3" y="14.3" width="3" height="3" rx="0.8" fill="none" stroke="#4f7080" stroke-width="1"/><rect x="10.1" y="14.3" width="3" height="3" rx="0.8" fill="none" stroke="#4f7080" stroke-width="1"/><rect x="14.9" y="14.3" width="3" height="3" rx="0.8" fill="none" stroke="#4f7080" stroke-width="1"/></svg>
<svg class="a" style="left:1192px;top:1022px;" width="18" height="18" viewBox="0 0 18 18"><circle cx="7" cy="4.5" r="3.5" stroke="#4f7080" stroke-width="1.3" fill="none"/><path d="M1 16.5c0-4 2.5-6 6-6s6 2 6 6z" stroke="#4f7080" stroke-width="1.3" fill="none"/><path d="M15.5 9c1 1 1 3 0 4" stroke="#4f7080" stroke-width="1.3" fill="none"/></svg>
<svg class="a" style="left:1227px;top:1023px;" width="18" height="15" viewBox="0 0 18 15"><rect x="0.7" y="0.7" width="16.6" height="13" stroke="#4f7080" stroke-width="1.3" fill="none"/><path d="M0.7 1.5l8.3 6.5 8.3-6.5" stroke="#4f7080" stroke-width="1.3" fill="none"/></svg>
<svg class="a" style="left:1262px;top:1022px;" width="18" height="18" viewBox="0 0 18 18"><path d="M0.7 0.7h16.6v12H8l-3.5 3.5v-3.5H0.7z" stroke="#4f7080" stroke-width="1.3" fill="none"/><path d="M4.5 5h9M4.5 8h6" stroke="#4f7080" stroke-width="1.3" fill="none"/></svg>
<svg class="a" style="left:1297px;top:1022px;" width="18" height="18" viewBox="0 0 18 18"><path d="M3.5 1l3 4-2 2c1 2.5 3 4.5 5.5 5.5l2-2 4 3-2 3.5C7 16 1.5 10 1 2.5z" stroke="#4f7080" stroke-width="1.3" fill="none"/><path d="M11 5.5h6M11 5.5l2.5-2.5M11 5.5l2.5 2.5" stroke="#4f7080" stroke-width="1.3" fill="none"/></svg>
<svg class="a" style="left:1332px;top:1022px;" width="18" height="18" viewBox="0 0 18 18"><path d="M0.7 0.7h16.6v12H8l-3.5 3.5v-3.5H0.7z" stroke="#4f7080" stroke-width="1.3" fill="none"/><circle cx="5" cy="6.5" r="0.9" fill="#4f7080"/><circle cx="9" cy="6.5" r="0.9" fill="#4f7080"/><circle cx="13" cy="6.5" r="0.9" fill="#4f7080"/></svg>
<svg class="a" style="left:1370px;top:1022px;" width="14" height="18" viewBox="0 0 14 18"><rect x="0.7" y="2.5" width="12.6" height="14.8" rx="1" stroke="#4f7080" stroke-width="1.3" fill="none"/><rect x="4" y="0.7" width="6" height="3" stroke="#4f7080" stroke-width="1.3" fill="none"/><path d="M3.5 8h7M3.5 11h7M3.5 14h5" stroke="#4f7080" stroke-width="1"/></svg>
<div class="a" style="left:1394px;top:571px;width:1px;height:484px;background:#52737f;"></div>
<div class="a" style="left:351px;top:208px;width:706px;height:639px;background:#ffffff;border-radius:6px;"></div>
<div id="t64" class="a t" style="left:373.5px;top:234.07px;font-size:20px;color:#33383d;font-weight:700;transform:scaleX(0.8898);transform-origin:0 0;">ronen_u1</div>
<svg class="a" style="left:1015px;top:230px;" width="21" height="21" viewBox="0 0 21 21"><circle cx="10.5" cy="10.5" r="9.6" fill="#bcc0c4"/><path d="M6.9 6.9l7.2 7.2M14.1 6.9l-7.2 7.2" stroke="#fff" stroke-width="2.4"/></svg>
<div class="a" style="left:351px;top:282px;width:706px;height:1px;background:#e3e7eb;"></div>
<div id="t65" class="a t" style="left:386px;top:318.93px;font-size:14.5px;color:#3e4750;font-weight:400;transform:scaleX(0.9243);transform-origin:0 0;">Agent info</div>
<div id="t66" class="a t" style="left:473.2px;top:318.93px;font-size:14.5px;color:#3e4750;font-weight:400;transform:scaleX(0.9091);transform-origin:0 0;">Unavailable Times</div>
<div class="a" style="left:373px;top:349px;width:662px;height:1px;background:#c5cacf;"></div>
<div class="a" style="left:460px;top:346.5px;width:133px;height:3px;background:#2a60c8;"></div>
<div class="a" style="left:373px;top:368.6px;width:661.5px;height:378px;background:transparent;box-sizing:border-box;border:1px solid #e1e5e9;"></div>
<div class="a" style="left:374px;top:415px;width:660px;height:1px;background:#e1e5e9;"></div>
<div class="a" style="left:506px;top:369.6px;width:1px;height:45.6px;background:#e1e5e9;"></div>
<div class="a" style="left:770px;top:369.6px;width:1px;height:45.6px;background:#e1e5e9;"></div>
<div id="t67" class="a t" style="left:520.6px;top:384.80px;font-size:13px;color:#33383d;font-weight:700;transform:scaleX(0.9360);transform-origin:0 0;">Original</div>
<div id="t68" class="a t" style="left:784.3px;top:384.80px;font-size:13px;color:#33383d;font-weight:700;transform:scaleX(0.9515);transform-origin:0 0;">Latest saved</div>
<svg class="a" style="left:570.8px;top:382px;" width="18" height="18" viewBox="0 0 18 18"><circle cx="9" cy="9" r="7.9" fill="none" stroke="#33383d" stroke-width="1.5"/><circle cx="9" cy="5.6" r="1" fill="#33383d"/><path d="M7.6 7.9h2.1v4.6h1v1H7.6v-1h1V8.9h-1z" fill="#33383d"/></svg>
<svg class="a" style="left:863.7px;top:382px;" width="18" height="18" viewBox="0 0 18 18"><circle cx="9" cy="9" r="7.9" fill="none" stroke="#33383d" stroke-width="1.5"/><circle cx="9" cy="5.6" r="1" fill="#33383d"/><path d="M7.6 7.9h2.1v4.6h1v1H7.6v-1h1V8.9h-1z" fill="#33383d"/></svg>
<div class="a" style="left:374px;top:415.8px;width:645px;height:66.39999999999998px;background:#f6f8fa;"></div>
<div class="a" style="left:374px;top:482.2px;width:645px;height:73.50000000000006px;background:#ffffff;"></div>
<div class="a" style="left:374px;top:555.7px;width:645px;height:66.29999999999995px;background:#f6f8fa;"></div>
<div class="a" style="left:374px;top:622px;width:645px;height:65.70000000000005px;background:#ffffff;"></div>
<div class="a" style="left:374px;top:687.7px;width:645px;height:57.69999999999993px;background:#f6f8fa;"></div>
<div class="a" style="left:1019.2px;top:415.8px;width:14.3px;height:329.6px;background:#fafbfc;"></div>
<div class="a" style="left:1019px;top:415.8px;width:1px;height:329.6px;background:#e9ecef;"></div>
<div class="a" style="left:1023px;top:419px;width:8px;height:225px;background:#c1c5c9;border-radius:4px;"></div>
<div id="t69" class="a t" style="left:387.4px;top:432.10px;font-size:13px;color:#33383d;font-weight:700;transform:scaleX(0.9600);transform-origin:0 0;">Mon</div>
<div id="t70" class="a t" style="left:387.4px;top:451.37px;font-size:13.5px;color:#3e4750;font-weight:400;transform:scaleX(0.9606);transform-origin:0 0;">Nov 24</div>
<svg class="a" style="left:517px;top:429.40000000000003px;" width="16" height="17" viewBox="0 0 16 17"><rect x="0.9" y="2.6" width="14.2" height="13.5" rx="1.3" fill="none" stroke="#33383d" stroke-width="1.6"/><rect x="0.9" y="2.6" width="14.2" height="3.6" fill="#33383d"/><rect x="3.2" y="0.2" width="1.8" height="4" fill="#33383d"/><rect x="11" y="0.2" width="1.8" height="4" fill="#33383d"/><path d="M4.5 9.8l2.6 2.6 4.6-4.6" fill="none" stroke="#33383d" stroke-width="1.6"/></svg>
<svg class="a" style="left:774.6px;top:429.40000000000003px;" width="16" height="17" viewBox="0 0 16 17"><rect x="0.9" y="2.6" width="14.2" height="13.5" rx="1.3" fill="none" stroke="#33383d" stroke-width="1.6"/><rect x="0.9" y="2.6" width="14.2" height="3.6" fill="#33383d"/><rect x="3.2" y="0.2" width="1.8" height="4" fill="#33383d"/><rect x="11" y="0.2" width="1.8" height="4" fill="#33383d"/><path d="M4.5 9.8l2.6 2.6 4.6-4.6" fill="none" stroke="#33383d" stroke-width="1.6"/></svg>
<div id="t71" class="a t" style="left:538.7px;top:431.67px;font-size:13.5px;color:#3e4750;font-weight:400;transform:scaleX(0.9679);transform-origin:0 0;">Available</div>
<div id="t72" class="a t" style="left:796.5px;top:431.67px;font-size:13.5px;color:#3e4750;font-weight:400;transform:scaleX(0.9679);transform-origin:0 0;">Available</div>
<div id="t73" class="a t" style="left:387.4px;top:497.70px;font-size:13px;color:#33383d;font-weight:700;transform:scaleX(1.0266);transform-origin:0 0;">Tue</div>
<div id="t74" class="a t" style="left:387.4px;top:517.57px;font-size:13.5px;color:#3e4750;font-weight:400;transform:scaleX(0.9839);transform-origin:0 0;">Nov 25</div>
<svg class="a" style="left:517px;top:495.0px;" width="16" height="17" viewBox="0 0 16 17"><rect x="0.9" y="2.6" width="14.2" height="13.5" rx="1.3" fill="none" stroke="#33383d" stroke-width="1.6"/><rect x="0.9" y="2.6" width="14.2" height="3.6" fill="#33383d"/><rect x="3.2" y="0.2" width="1.8" height="4" fill="#33383d"/><rect x="11" y="0.2" width="1.8" height="4" fill="#33383d"/><path d="M4.8 10.5h6.4" stroke="#33383d" stroke-width="1.6"/></svg>
<svg class="a" style="left:774.6px;top:495.0px;" width="16" height="17" viewBox="0 0 16 17"><rect x="0.9" y="2.6" width="14.2" height="13.5" rx="1.3" fill="none" stroke="#33383d" stroke-width="1.6"/><rect x="0.9" y="2.6" width="14.2" height="3.6" fill="#33383d"/><rect x="3.2" y="0.2" width="1.8" height="4" fill="#33383d"/><rect x="11" y="0.2" width="1.8" height="4" fill="#33383d"/><path d="M4.8 10.5h6.4" stroke="#33383d" stroke-width="1.6"/></svg>
<div id="t75" class="a t" style="left:538.7px;top:497.27px;font-size:13.5px;color:#3e4750;font-weight:400;transform:scaleX(0.9661);transform-origin:0 0;">Unavailable</div>
<div id="t76" class="a t" style="left:796.5px;top:497.27px;font-size:13.5px;color:#3e4750;font-weight:400;transform:scaleX(0.9661);transform-origin:0 0;">Unavailable</div>
<div id="t77" class="a t" style="left:387.4px;top:572.40px;font-size:13px;color:#33383d;font-weight:700;transform:scaleX(0.9353);transform-origin:0 0;">Wed</div>
<div id="t78" class="a t" style="left:387.4px;top:592.07px;font-size:13.5px;color:#3e4750;font-weight:400;transform:scaleX(0.9839);transform-origin:0 0;">Nov 26</div>
<svg class="a" style="left:517px;top:569.6999999999999px;" width="16" height="17" viewBox="0 0 16 17"><rect x="0.9" y="2.6" width="14.2" height="13.5" rx="1.3" fill="none" stroke="#33383d" stroke-width="1.6"/><rect x="0.9" y="2.6" width="14.2" height="3.6" fill="#33383d"/><rect x="3.2" y="0.2" width="1.8" height="4" fill="#33383d"/><rect x="11" y="0.2" width="1.8" height="4" fill="#33383d"/><path d="M4.5 9.8l2.6 2.6 4.6-4.6" fill="none" stroke="#33383d" stroke-width="1.6"/></svg>
<svg class="a" style="left:774.6px;top:569.6999999999999px;" width="16" height="17" viewBox="0 0 16 17"><rect x="0.9" y="2.6" width="14.2" height="13.5" rx="1.3" fill="none" stroke="#33383d" stroke-width="1.6"/><rect x="0.9" y="2.6" width="14.2" height="3.6" fill="#33383d"/><rect x="3.2" y="0.2" width="1.8" height="4" fill="#33383d"/><rect x="11" y="0.2" width="1.8" height="4" fill="#33383d"/><path d="M4.5 9.8l2.6 2.6 4.6-4.6" fill="none" stroke="#33383d" stroke-width="1.6"/></svg>
<div id="t79" class="a t" style="left:538.7px;top:571.97px;font-size:13.5px;color:#3e4750;font-weight:400;transform:scaleX(0.9679);transform-origin:0 0;">Available</div>
<div id="t80" class="a t" style="left:796.5px;top:571.97px;font-size:13.5px;color:#3e4750;font-weight:400;transform:scaleX(0.9679);transform-origin:0 0;">Available</div>
<div id="t81" class="a t" style="left:387.4px;top:638.20px;font-size:13px;color:#33383d;font-weight:700;transform:scaleX(0.9421);transform-origin:0 0;">Thu</div>
<div id="t82" class="a t" style="left:387.4px;top:657.17px;font-size:13.5px;color:#3e4750;font-weight:400;transform:scaleX(0.9839);transform-origin:0 0;">Nov 27</div>
<svg class="a" style="left:517px;top:635.5px;" width="16" height="17" viewBox="0 0 16 17"><rect x="0.9" y="2.6" width="14.2" height="13.5" rx="1.3" fill="none" stroke="#33383d" stroke-width="1.6"/><rect x="0.9" y="2.6" width="14.2" height="3.6" fill="#33383d"/><rect x="3.2" y="0.2" width="1.8" height="4" fill="#33383d"/><rect x="11" y="0.2" width="1.8" height="4" fill="#33383d"/><path d="M4.5 9.8l2.6 2.6 4.6-4.6" fill="none" stroke="#33383d" stroke-width="1.6"/></svg>
<svg class="a" style="left:774.6px;top:635.5px;" width="16" height="17" viewBox="0 0 16 17"><rect x="0.9" y="2.6" width="14.2" height="13.5" rx="1.3" fill="none" stroke="#33383d" stroke-width="1.6"/><rect x="0.9" y="2.6" width="14.2" height="3.6" fill="#33383d"/><rect x="3.2" y="0.2" width="1.8" height="4" fill="#33383d"/><rect x="11" y="0.2" width="1.8" height="4" fill="#33383d"/><path d="M4.5 9.8l2.6 2.6 4.6-4.6" fill="none" stroke="#33383d" stroke-width="1.6"/></svg>
<div id="t83" class="a t" style="left:538.7px;top:637.77px;font-size:13.5px;color:#3e4750;font-weight:400;transform:scaleX(0.9679);transform-origin:0 0;">Available</div>
<div id="t84" class="a t" style="left:796.5px;top:637.77px;font-size:13.5px;color:#3e4750;font-weight:400;transform:scaleX(0.9679);transform-origin:0 0;">Available</div>
<div id="t85" class="a t" style="left:387.4px;top:704.00px;font-size:13px;color:#33383d;font-weight:700;transform:scaleX(0.9688);transform-origin:0 0;">Fri</div>
<div id="t86" class="a t" style="left:387.4px;top:722.97px;font-size:13.5px;color:#3e4750;font-weight:400;transform:scaleX(0.9839);transform-origin:0 0;">Nov 28</div>
<svg class="a" style="left:517px;top:701.3px;" width="16" height="17" viewBox="0 0 16 17"><rect x="0.9" y="2.6" width="14.2" height="13.5" rx="1.3" fill="none" stroke="#33383d" stroke-width="1.6"/><rect x="0.9" y="2.6" width="14.2" height="3.6" fill="#33383d"/><rect x="3.2" y="0.2" width="1.8" height="4" fill="#33383d"/><rect x="11" y="0.2" width="1.8" height="4" fill="#33383d"/><path d="M4.5 9.8l2.6 2.6 4.6-4.6" fill="none" stroke="#33383d" stroke-width="1.6"/></svg>
<svg class="a" style="left:774.6px;top:701.3px;" width="16" height="17" viewBox="0 0 16 17"><rect x="0.9" y="2.6" width="14.2" height="13.5" rx="1.3" fill="none" stroke="#33383d" stroke-width="1.6"/><rect x="0.9" y="2.6" width="14.2" height="3.6" fill="#33383d"/><rect x="3.2" y="0.2" width="1.8" height="4" fill="#33383d"/><rect x="11" y="0.2" width="1.8" height="4" fill="#33383d"/><path d="M4.5 9.8l2.6 2.6 4.6-4.6" fill="none" stroke="#33383d" stroke-width="1.6"/></svg>
<div id="t87" class="a t" style="left:538.7px;top:703.57px;font-size:13.5px;color:#3e4750;font-weight:400;transform:scaleX(0.9679);transform-origin:0 0;">Available</div>
<div id="t88" class="a t" style="left:796.5px;top:703.57px;font-size:13.5px;color:#3e4750;font-weight:400;transform:scaleX(0.9679);transform-origin:0 0;">Available</div>
<div id="t89" class="a t" style="left:538.9px;top:521.37px;font-size:13.5px;color:#3e4750;font-weight:400;transform:scaleX(0.9570);transform-origin:0 0;">18:00 - 23:00</div>
<div id="t90" class="a t" style="left:796.5px;top:521.37px;font-size:13.5px;color:#3e4750;font-weight:400;transform:scaleX(0.9506);transform-origin:0 0;">13:00 - 14:00</div>
<svg class="a" style="left:879px;top:518px;" width="14" height="13" viewBox="0 0 14 13"><path d="M1 1h12v8.5H6.5L3.5 12V9.5H1z" fill="none" stroke="#33383d" stroke-width="1.3"/><path d="M4 5.2h1M6.5 5.2h1M9 5.2h1" stroke="#33383d" stroke-width="1.2"/></svg>
<div class="a" style="left:373px;top:785px;width:48.8px;height:39.6px;background:#2a60c8;border-radius:4px;"></div>
<div id="t91" class="a t" style="left:387.8px;top:796.50px;font-size:15px;color:#ffffff;font-weight:500;transform:scaleX(0.9230);transform-origin:0 0;">OK</div>
</body></html>
